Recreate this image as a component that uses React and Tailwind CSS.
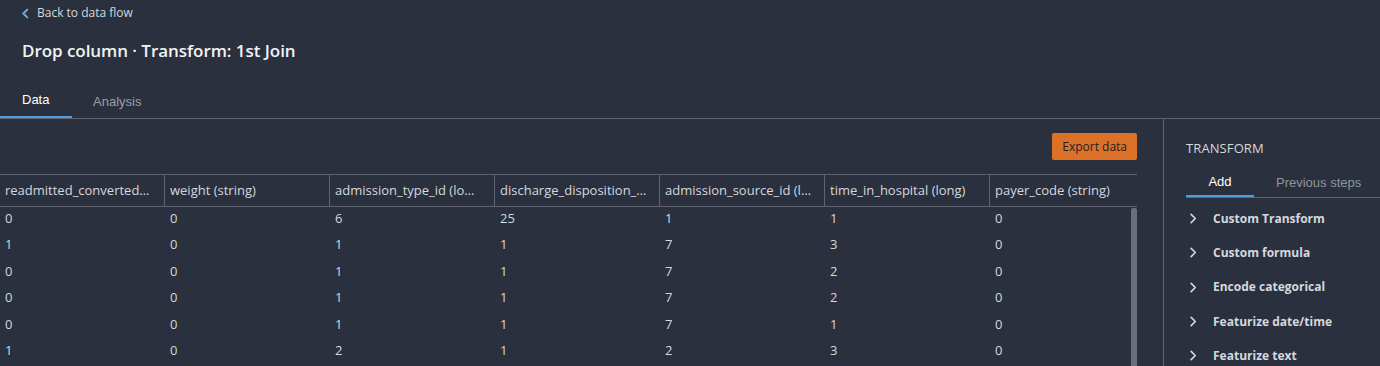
import React from "react";

const headers = [
  "readmitted_converted…",
  "weight (string)",
  "admission_type_id (lo…",
  "discharge_disposition_…",
  "admission_source_id (l…",
  "time_in_hospital (long)",
  "payer_code (string)",
];

const rows = [
  ["0", "0", "6", "25", "1", "1", "0"],
  ["1", "0", "1", "1", "7", "3", "0"],
  ["0", "0", "1", "1", "7", "2", "0"],
  ["0", "0", "1", "1", "7", "2", "0"],
  ["0", "0", "1", "1", "7", "1", "0"],
  ["1", "0", "2", "1", "2", "3", "0"],
];

const transforms = [
  "Custom Transform",
  "Custom formula",
  "Encode categorical",
  "Featurize date/time",
  "Featurize text",
];

function Chevron({ dir = "right", className = "", width = 1.8 }) {
  return (
    <svg
      viewBox="0 0 8 12"
      className={className}
      fill="none"
      stroke="currentColor"
      strokeWidth={width}
      strokeLinecap="round"
      strokeLinejoin="round"
    >
      {dir === "right" ? <path d="M2 1.5 L6.5 6 L2 10.5" /> : <path d="M6 1.5 L1.5 6 L6 10.5" />}
    </svg>
  );
}

export default function App() {
  return (
    <div
      className="h-[366px] w-[1380px] overflow-hidden bg-[#2a303d] text-[#d5d8dd]"
      style={{ fontFamily: '"Open Sans", "Noto Sans", sans-serif' }}
    >
      {/* header */}
      <div className="px-[22px]">
        <div className="flex h-[25px] items-center gap-[8px] pt-[1px]">
          <Chevron dir="left" width={2.2} className="h-[11px] w-[7px] text-[#5fb4da]" />
          <span className="text-[12px] text-[#d5d8dd]">Back to data flow</span>
        </div>
        <div className="flex h-[52px] items-center pb-[1px]">
          <h1 className="text-[17px] font-semibold tracking-[-0.05px] text-[#f2f3f3]">
            Drop column · Transform: 1st Join
          </h1>
        </div>
      </div>

      {/* tabs */}
      <div
        className="flex h-[42px] items-stretch border-b border-[#5f6470]"
        style={{ fontFamily: '"Liberation Sans", Arial, sans-serif' }}
      >
        <div className="flex w-[72px] items-center border-b-2 border-[#4d9fdc] pl-[22px] pt-[7px] text-[13px] text-white">
          Data
        </div>
        <div className="flex items-center pl-[21px] pt-[8px] text-[13px] text-[#9aa0a8]">
          Analysis
        </div>
      </div>

      <div className="flex">
        {/* main */}
        <div className="w-[1164px] shrink-0 border-r border-[#5f6470] pr-[26px] pt-[14px]">
          <div className="flex justify-end">
            <button className="h-[27px] rounded-[2px] bg-[#dd7127] px-[10px] text-[12px] text-[#1b1f27]">
              Export data
            </button>
          </div>

          <div className="mt-[14px] text-[13px]">
            <div className="grid grid-cols-[165px_165px_165px_165px_165px_165px_1fr] border-y border-[#5f6470]">
              {headers.map((h, i) => (
                <div
                  key={i}
                  className={`flex h-[31px] items-center overflow-hidden whitespace-nowrap pl-[5px] text-[#d5d8dd] ${
                    i < headers.length - 1 ? "border-r border-[#5f6470]" : ""
                  }`}
                >
                  {h}
                </div>
              ))}
            </div>
            <div className="relative">
              {rows.map((r, ri) => (
                <div
                  key={ri}
                  className="grid h-[26.4px] grid-cols-[165px_165px_165px_165px_165px_165px_1fr]"
                >
                  {r.map((c, ci) => (
                    <div key={ci} className="pl-[5px] pt-[2px] leading-[18px] text-[#d5d8dd]">
                      {c}
                    </div>
                  ))}
                </div>
              ))}
              <div className="absolute right-0 top-[1px] h-[200px] w-[6px] rounded-t-[2px] bg-[#6b7080]" />
            </div>
          </div>
        </div>

        {/* right panel */}
        <div className="flex-1 pl-[22px] pt-[20px]">
          <div className="text-[13px] tracking-[0.1px] text-[#d5d8dd]">TRANSFORM</div>
          <div
            className="mt-[9px] flex h-[30px] border-b border-[#5f6470]"
            style={{ fontFamily: '"Liberation Sans", Arial, sans-serif' }}
          >
            <div className="flex w-[68px] items-center justify-center border-b-2 border-[#4d9fdc] pt-[1px] text-[13px] text-white">
              Add
            </div>
            <div className="flex items-center pt-[1px] pl-[22px] text-[13px] text-[#8f959e]">
              Previous steps
            </div>
          </div>
          <div className="pt-[4px]">
            {transforms.map((t) => (
              <div key={t} className="flex h-[34.3px] items-center">
                <Chevron className="ml-[3px] h-[11px] w-[8px] text-[#d5d8dd]" />
                <span className="ml-[16px] text-[12px] font-bold text-[#d5d8dd]">{t}</span>
              </div>
            ))}
          </div>
        </div>
      </div>
    </div>
  );
}
